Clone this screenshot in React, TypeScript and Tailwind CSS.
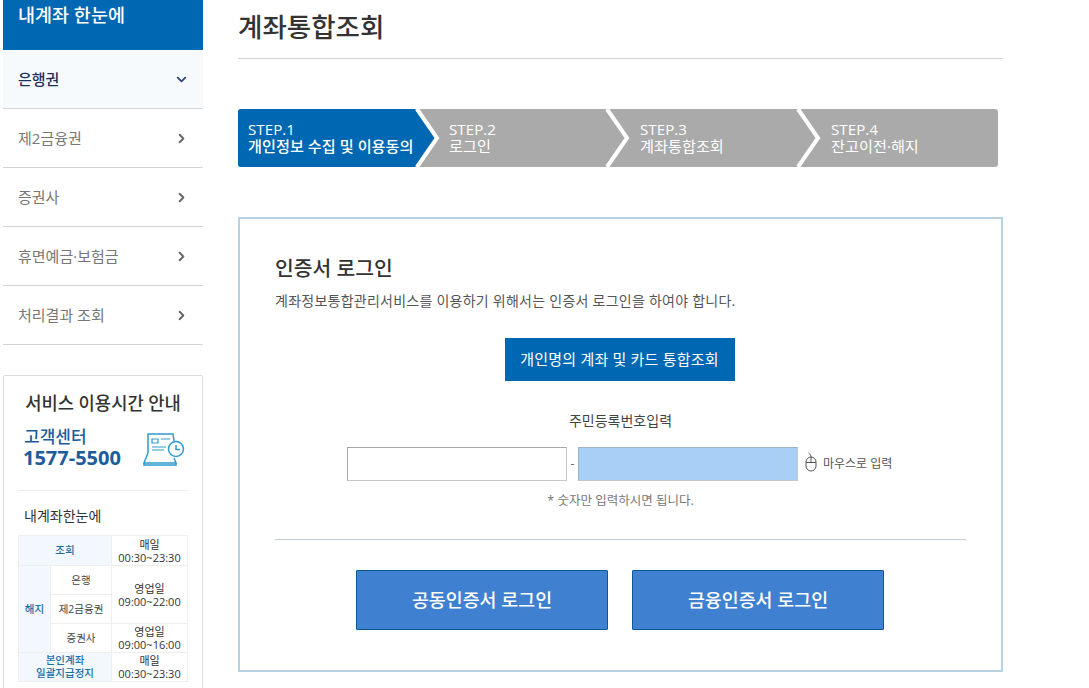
import React from 'react';
import { ChevronDown, ChevronRight } from 'lucide-react';

const menu = ['은행권', '제2금융권', '증권사', '휴면예금·보험금', '처리결과 조회'];

const steps = [
  { no: 'STEP.1', label: '개인정보 수집 및 이용동의', width: 'w-[177px]' },
  { no: 'STEP.2', label: '로그인', width: 'w-[190px]' },
  { no: 'STEP.3', label: '계좌통합조회', width: 'w-[191px]' },
  { no: 'STEP.4', label: '잔고이전·해지', width: 'flex-1' },
];

const Sidebar: React.FC = () => (
  <aside className="w-[200px] shrink-0">
    <div className="h-[50px] bg-[#0067b3] pl-[15px] text-[18.5px] font-medium leading-[30px] text-white">내계좌 한눈에</div>
    <ul>
      {menu.map((item, i) => (
        <li
          key={item}
          className={`flex h-[59px] items-center justify-between border-b border-[#d2d2d2] pl-[15px] pr-[14px] pt-[1px] text-[15px] ${
            i === 0 ? 'bg-[#f7fafd] font-medium text-[#1d2f5c]' : 'text-[#777777]'
          }`}
        >
          <span>{item}</span>
          {i === 0 ? (
            <ChevronDown size={15} strokeWidth={3} className="text-[#2f4a86]" />
          ) : (
            <ChevronRight size={15} strokeWidth={3} className="text-[#666666]" />
          )}
        </li>
      ))}
    </ul>
    <div className="mt-[30px] h-[340px] rounded-[2px] border border-[#dcdcdc] px-[14px] pt-[14px]">
      <h3 className="whitespace-nowrap text-center text-[17.7px] font-medium leading-[26px] text-[#333333]">서비스 이용시간 안내</h3>
      <div className="mt-[12px] flex items-center justify-between border-b border-[#eeeeee] px-[6px] pb-[20px]">
        <div>
          <p className="text-[17px] font-medium leading-[18px] text-[#1d5c9c]">고객센터</p>
          <p className="ml-[-1px] text-[20px] font-bold leading-[24px] text-[#1d5c9c]">1577-5500</p>
        </div>
        <svg width="42" height="34" viewBox="0 0 42 34" fill="none" stroke="#2f9bd1" strokeWidth="1.5" className="mr-[-3px]">
          <path d="M5 21V2h25l1 7" />
          <path d="M9 7h6v4H9zM18 7h9M9 15h14M9 18h12" strokeWidth="1.2" />
          <path d="M5 21 1 31h32l-2-5" />
          <path d="M1 31v2h32v-2" />
          <circle cx="33" cy="17" r="7.5" fill="#ffffff" />
          <path d="M33 13v4.5h4" />
        </svg>
      </div>
      <p className="mt-[15px] text-[14px] leading-[20px] text-[#333333]">
        <span className="pl-[6px]">내계좌한눈에</span>
      </p>
      <table className="mt-[9px] w-[169px] table-fixed border-collapse text-center text-[10.5px] leading-[13px] text-[#444444]">
        <colgroup>
          <col className="w-[32px]" />
          <col className="w-[61px]" />
          <col className="w-[76px]" />
        </colgroup>
        <tbody>
          <tr className="h-[30px]">
            <td colSpan={2} className="border border-[#eeeeee] bg-[#f2f8fd] font-medium text-[#1d6fa8]">조회</td>
            <td className="border border-[#eeeeee] text-[11px] text-[#333333]">매일<br />00:30~23:30</td>
          </tr>
          <tr className="h-[29px]">
            <td rowSpan={3} className="border border-[#eeeeee] bg-[#f2f8fd] font-medium text-[#1d6fa8]">해지</td>
            <td className="border border-[#eeeeee]">은행</td>
            <td rowSpan={2} className="border border-[#eeeeee] text-[11px] text-[#333333]">영업일<br />09:00~22:00</td>
          </tr>
          <tr className="h-[29px]">
            <td className="border border-[#eeeeee]">제2금융권</td>
          </tr>
          <tr className="h-[29px]">
            <td className="border border-[#eeeeee]">증권사</td>
            <td className="border border-[#eeeeee] text-[11px] text-[#333333]">영업일<br />09:00~16:00</td>
          </tr>
          <tr className="h-[29px]">
            <td colSpan={2} className="border border-[#eeeeee] bg-[#f2f8fd] font-medium text-[#1d6fa8]">본인계좌<br />일괄지급정지</td>
            <td className="border border-[#eeeeee] text-[11px] text-[#333333]">매일<br />00:30~23:30</td>
          </tr>
        </tbody>
      </table>
    </div>
  </aside>
);

const StepBar: React.FC = () => (
  <div className="mr-[5px] mt-[50px] flex h-[58px] rounded-[3px] bg-[#aaaaaa]">
    {steps.map((step, i) => {
      const active = i === 0;
      return (
        <div
          key={step.no}
          className={`relative pt-[12px] text-[15.2px] leading-[17px] text-white ${step.width} ${
            active ? 'rounded-l-[3px] bg-[#0067b3] pl-[10px] font-medium' : i === 1 ? 'pl-[34px]' : 'pl-[35px]'
          }`}
        >
          <p className="font-normal">{step.no}</p>
          <p className="whitespace-nowrap">{step.label}</p>
          {i < 3 && (
            <svg width="27" height="58" viewBox="0 0 27 58" className="absolute left-full top-0 z-10 overflow-visible">
              <polygon points="0,0 20,29 0,58" fill={active ? '#0067b3' : '#aaaaaa'} />
              <polyline points="2,0 22,29 2,58" fill="none" stroke="#ffffff" strokeWidth="4" />
            </svg>
          )}
        </div>
      );
    })}
  </div>
);

const LoginPanel: React.FC = () => (
  <section className="mt-[50px] h-[455px] border-2 border-[#b5d3e2] px-[35px] pt-[35px]">
    <h3 className="text-[20.4px] font-medium leading-[28px] text-[#333333]">인증서 로그인</h3>
    <p className="mt-[9px] whitespace-nowrap text-[14px] leading-[20px] tracking-[0.25px] text-[#555555]">
      계좌정보통합관리서비스를 이용하기 위해서는 인증서 로그인을 하여야 합니다.
    </p>
    <div className="mt-[27px] flex justify-center pr-[2px]">
      <button className="h-[43px] w-[230px] bg-[#0067b3] text-[15px] tracking-[0.2px] text-white">개인명의 계좌 및 카드 통합조회</button>
    </div>
    <p className="mt-[30px] text-center text-[14px] leading-[20px] text-[#444444]">주민등록번호입력</p>
    <div className="mt-[16px] flex items-center pl-[72px]">
      <div className="h-[34px] w-[220px] border border-[#c8c8c8] border-t-[#a8a8a8] border-l-[#a8a8a8] bg-white" />
      <span className="w-[11px] text-center text-[12px] text-[#666666]">-</span>
      <div className="h-[34px] w-[220px] border border-[#c8c8c8] border-t-[#a0b4c8] border-l-[#a0b4c8] bg-[#a8cff5]" />
      <svg width="14" height="20" viewBox="0 0 14 20" fill="none" stroke="#555555" strokeWidth="1" className="ml-[6px] mt-[-4px]">
        <rect x="2" y="5" width="10" height="14" rx="5" />
        <path d="M2 10.5h10M7 5v5.5M7 5C7 3 6 2 4.5 1" />
      </svg>
      <span className="ml-[5px] text-[12px] text-[#555555]">마우스로 입력</span>
    </div>
    <p className="mt-[11px] text-center text-[12.5px] leading-[18px] text-[#777777]">* 숫자만 입력하시면 됩니다.</p>
    <hr className="mt-[29px] border-t border-[#c4cdd2]" />
    <div className="mt-[30px] flex justify-center gap-[24px] pr-[1px]">
      {['공동인증서 로그인', '금융인증서 로그인'].map((label) => (
        <button
          key={label}
          className="h-[60px] w-[252px] rounded-[1px] border border-[#0b5a96] bg-[#3f80d0] text-[18.4px] font-medium text-white"
        >
          {label}
        </button>
      ))}
    </div>
  </section>
);

const App: React.FC = () => (
  <div className="flex h-[688px] w-[1089px] overflow-hidden bg-white pl-[3px] font-['Open_Sans','Noto_Sans_CJK_KR',sans-serif]">
    <Sidebar />
    <main className="ml-[35px] w-[765px]">
      <h2 className="h-[59px] border-b border-[#d5d5d5] pt-[10px] text-[26.5px] font-medium leading-[34px] text-[#333333]">
        계좌통합조회
      </h2>
      <StepBar />
      <LoginPanel />
    </main>
  </div>
);

export default App;
